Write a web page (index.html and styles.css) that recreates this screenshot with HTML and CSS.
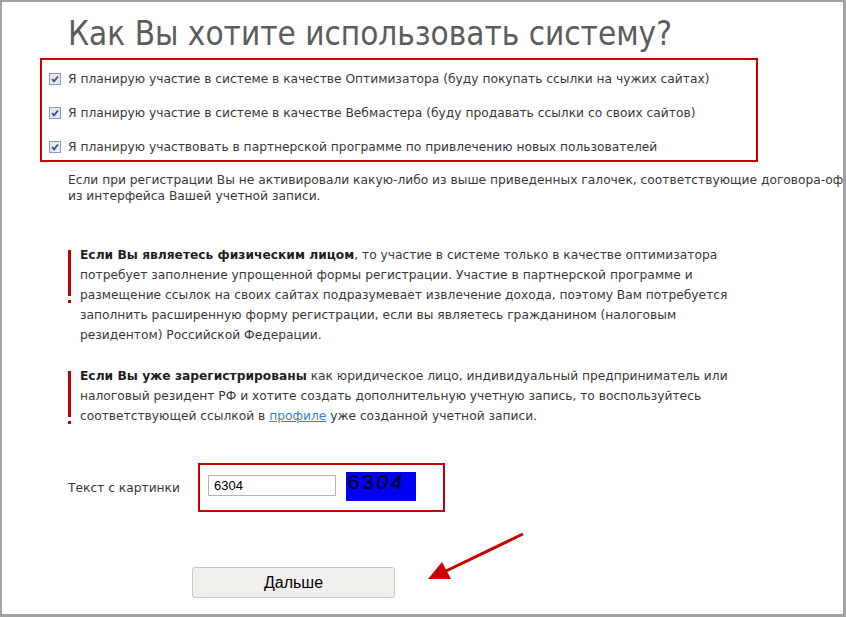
FILE: index.html
```html
<!DOCTYPE html>
<html lang="ru">
<head>
<meta charset="utf-8">
<title>Регистрация</title>
<link rel="stylesheet" href="styles.css">
</head>
<body>
<div class="page">
  <h1 class="title">Как Вы хотите использовать систему?</h1>

  <div class="choices">
    <label class="choice">
      <svg class="cb" width="12" height="12" viewBox="0 0 12 12"><rect x="0.5" y="0.5" width="11" height="11" fill="#e4e8f0" stroke="#8e99ad"/><path d="M3 6 L5 8.3 L9 3.5" fill="none" stroke="#3b4f86" stroke-width="1.8"/></svg>
      <span>Я планирую участие в системе в качестве Оптимизатора (буду покупать ссылки на чужих сайтах)</span>
    </label>
    <label class="choice">
      <svg class="cb" width="12" height="12" viewBox="0 0 12 12"><rect x="0.5" y="0.5" width="11" height="11" fill="#e4e8f0" stroke="#8e99ad"/><path d="M3 6 L5 8.3 L9 3.5" fill="none" stroke="#3b4f86" stroke-width="1.8"/></svg>
      <span>Я планирую участие в системе в качестве Вебмастера (буду продавать ссылки со своих сайтов)</span>
    </label>
    <label class="choice">
      <svg class="cb" width="12" height="12" viewBox="0 0 12 12"><rect x="0.5" y="0.5" width="11" height="11" fill="#e4e8f0" stroke="#8e99ad"/><path d="M3 6 L5 8.3 L9 3.5" fill="none" stroke="#3b4f86" stroke-width="1.8"/></svg>
      <span>Я планирую участвовать в партнерской программе по привлечению новых пользователей</span>
    </label>
  </div>

  <p class="note">Если при регистрации Вы не активировали какую-либо из выше приведенных галочек, соответствующие договора-оферты можно будет принять<br>из интерфейса Вашей учетной записи.</p>

  <p class="info info-first"><b>Если Вы являетесь физическим лицом</b>, то участие в системе только в качестве оптимизатора<br>потребует заполнение упрощенной формы регистрации. Участие в партнерской программе и<br>размещение ссылок на своих сайтах подразумевает извлечение дохода, поэтому Вам потребуется<br>заполнить расширенную форму регистрации, если вы являетесь гражданином (налоговым<br>резидентом) Российской Федерации.</p>

  <p class="info info-second"><b>Если Вы уже зарегистрированы</b> как юридическое лицо, индивидуальный предприниматель или<br>налоговый резидент РФ и хотите создать дополнительную учетную запись, то воспользуйтесь<br>соответствующей ссылкой в <a href="#" class="link">профиле</a> уже созданной учетной записи.</p>

  <div class="captcha-row">
    <span class="captcha-label">Текст с картинки</span>
    <div class="captcha-box">
      <input class="captcha-input" type="text" value="6304">
      <div class="captcha-img"><span class="cap-up">63</span><i class="cap-it">04</i></div>
    </div>
  </div>

  <button class="next" type="button">Дальше</button>

  <svg class="arrow" width="120" height="70" viewBox="0 0 120 70">
    <line x1="105" y1="8" x2="28" y2="45" stroke="#c80000" stroke-width="3"/>
    <polygon points="10,53 24,36 33,53" fill="#c80000"/>
  </svg>
</div>
</body>
</html>
```

FILE: styles.css
```css
html, body {
  margin: 0;
  padding: 0;
  background: #fff;
}

.page {
  position: relative;
  width: 846px;
  height: 617px;
  box-sizing: border-box;
  border-style: solid;
  border-color: #a2a2a2;
  border-width: 2px 3px 3px 2px;
  overflow: hidden;
  background: #fff;
  font-family: "DejaVu Sans", Verdana, sans-serif;
  font-size: 12.25px;
  color: #383838;
}

.title {
  margin: 12px 0 0 66px;
  height: 44px;
  line-height: 40px;
  font-family: "Liberation Sans Narrow", "DejaVu Sans Condensed", "Liberation Sans", sans-serif;
  font-weight: normal;
  font-size: 33px;
  color: #5c5c5c;
  white-space: nowrap;
}

.choices {
  margin: 0 0 0 38px;
  width: 718px;
  height: 104px;
  box-sizing: border-box;
  border: 2px solid #c40000;
  padding-top: 2px;
}

.choice {
  display: flex;
  align-items: center;
  height: 34px;
  padding-left: 7px;
  gap: 7px;
  white-space: nowrap;
}

.cb {
  flex: none;
  display: block;
}

.note {
  margin: 10px 0 0 66px;
  line-height: 16px;
  white-space: nowrap;
}

.info {
  margin: 0 0 0 66px;
  padding-left: 12px;
  line-height: 20px;
  white-space: nowrap;
  background-image: linear-gradient(#c40000, #c40000), linear-gradient(#c40000, #c40000);
  background-repeat: no-repeat;
  background-size: 3px 46px, 3px 3px;
  background-position: 0 5px, 0 55px;
}

.info-first {
  margin-top: 41px;
}

.info-second {
  margin-top: 21px;
}

.info b {
  color: #1e1e1e;
}

.link {
  color: #2b8ad3;
}

.captcha-row {
  display: flex;
  align-items: center;
  margin: 37px 0 0 66px;
}

.captcha-label {
  width: 130px;
  flex: none;
}

.captcha-box {
  display: flex;
  align-items: flex-start;
  gap: 10px;
  width: 247px;
  height: 49px;
  box-sizing: border-box;
  border: 2px solid #c40000;
  padding: 7px 0 0 8px;
}

.captcha-input {
  margin: 3px 0 0 0;
  width: 128px;
  height: 21px;
  box-sizing: border-box;
  border: 1px solid #b4b4b4;
  padding: 0 5px;
  font-family: "Liberation Sans", Arial, sans-serif;
  font-size: 13px;
  color: #000;
  outline: none;
}

.captcha-img {
  width: 70px;
  height: 29px;
  background: #0000f5;
  color: #000;
  font-family: "Liberation Sans", Arial, sans-serif;
  font-size: 21px;
  line-height: 19px;
  padding-left: 2px;
  box-sizing: border-box;
  letter-spacing: 2.5px;
  white-space: nowrap;
}

.cap-up {
  font-style: normal;
}

.cap-it {
  font-style: italic;
}

.next {
  display: block;
  margin: 55px 0 0 190px;
  width: 203px;
  height: 31px;
  border: 1px solid #c6c6c2;
  border-radius: 3px;
  background: #f0efeb;
  font-family: "Liberation Sans", Arial, sans-serif;
  font-size: 16px;
  color: #000;
  padding: 0;
}

.arrow {
  position: absolute;
  left: 416px;
  top: 524px;
}
```
